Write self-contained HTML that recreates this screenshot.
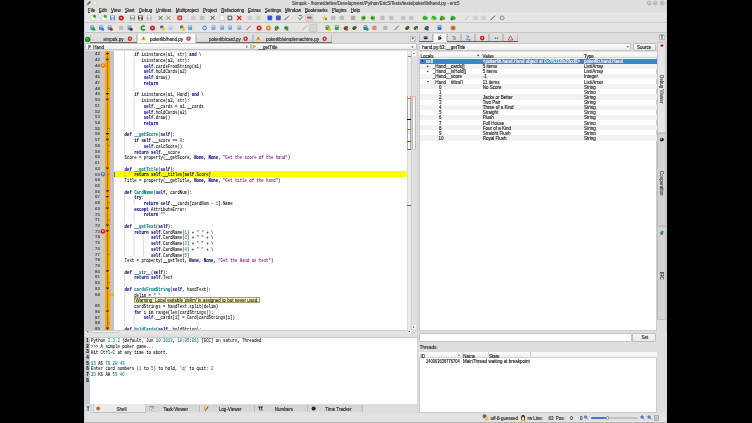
<!DOCTYPE html>
<html><head><meta charset="utf-8"><title>eric5</title><style>
*{margin:0;padding:0;box-sizing:border-box}
html,body{width:752px;height:423px;overflow:hidden;background:#000}
body{position:relative;font-family:"Liberation Sans",sans-serif;font-size:4.5px;color:#1e1e1e}
#root{position:absolute;left:0;top:0;width:752px;height:423px;background:#000;will-change:transform;overflow:hidden}
.a{position:absolute}
.t{position:absolute;white-space:pre;line-height:5px;-webkit-text-stroke:0.12px currentColor}
.m{position:absolute;white-space:pre;font-family:"Liberation Mono",monospace;font-size:4.6px;line-height:5.72px;color:#000;transform:scaleX(0.87);transform-origin:0 0;-webkit-text-stroke:0.05px currentColor}
.k{color:#00007f;font-weight:bold;-webkit-text-stroke:0.1px currentColor}
.f{color:#007f7f;font-weight:bold;-webkit-text-stroke:0.1px currentColor}
.n{color:#007f7f}
.s{color:#7f007f}
</style></head><body><div id="root">
<div class="a" style="left:84.00px;top:0.00px;width:583.00px;height:423.00px;background:#e3e2e1"></div>
<div class="a" style="left:84.00px;top:0.00px;width:1.00px;height:423.00px;background:#b9d3ee"></div>
<div class="a" style="left:666.00px;top:0.00px;width:1.00px;height:423.00px;background:#cfcfcf"></div>
<div class="a" style="left:85.00px;top:0.00px;width:581.00px;height:13.20px;background:#dfdedd"></div>
<div class="t" style="left:292.00px;top:0.60px;color:#3a3a3a;font-size:4.45px">Simpok - /home/detlev/Development/Python/Eric5/Tests/tests/pokerlib/hand.py - eric5</div>
<div class="a" style="left:85.00px;top:13.20px;width:581.00px;height:0.50px;background:#efeeed"></div>
<div class="a" style="left:85.00px;top:13.70px;width:581.00px;height:8.50px;background:#e6e5e4"></div>
<div class="a" style="left:85.00px;top:22.20px;width:581.00px;height:0.80px;background:#cac9c8"></div>
<div class="a" style="left:85.00px;top:23.00px;width:581.00px;height:8.70px;background:#e6e5e4"></div>
<div class="a" style="left:85.00px;top:31.70px;width:581.00px;height:0.90px;background:#c4c3c2"></div>
<div class="t" style="left:88.00px;top:8.20px;color:#1a1a1a">File</div>
<div class="a" style="left:88.00px;top:12.20px;width:2.40px;height:0.50px;background:#444"></div>
<div class="t" style="left:99.00px;top:8.20px;color:#1a1a1a">Edit</div>
<div class="a" style="left:99.00px;top:12.20px;width:2.40px;height:0.50px;background:#444"></div>
<div class="t" style="left:111.00px;top:8.20px;color:#1a1a1a">View</div>
<div class="a" style="left:111.00px;top:12.20px;width:2.40px;height:0.50px;background:#444"></div>
<div class="t" style="left:125.00px;top:8.20px;color:#1a1a1a">Start</div>
<div class="a" style="left:125.00px;top:12.20px;width:2.40px;height:0.50px;background:#444"></div>
<div class="t" style="left:139.00px;top:8.20px;color:#1a1a1a">Debug</div>
<div class="a" style="left:139.00px;top:12.20px;width:2.40px;height:0.50px;background:#444"></div>
<div class="t" style="left:156.00px;top:8.20px;color:#1a1a1a">Unittest</div>
<div class="a" style="left:156.00px;top:12.20px;width:2.40px;height:0.50px;background:#444"></div>
<div class="t" style="left:175.80px;top:8.20px;color:#1a1a1a">Multiproject</div>
<div class="a" style="left:175.80px;top:12.20px;width:2.40px;height:0.50px;background:#444"></div>
<div class="t" style="left:203.00px;top:8.20px;color:#1a1a1a">Project</div>
<div class="a" style="left:203.00px;top:12.20px;width:2.40px;height:0.50px;background:#444"></div>
<div class="t" style="left:221.30px;top:8.20px;color:#1a1a1a">Refactoring</div>
<div class="a" style="left:221.30px;top:12.20px;width:2.40px;height:0.50px;background:#444"></div>
<div class="t" style="left:248.00px;top:8.20px;color:#1a1a1a">Extras</div>
<div class="a" style="left:248.00px;top:12.20px;width:2.40px;height:0.50px;background:#444"></div>
<div class="t" style="left:265.00px;top:8.20px;color:#1a1a1a">Settings</div>
<div class="a" style="left:265.00px;top:12.20px;width:2.40px;height:0.50px;background:#444"></div>
<div class="t" style="left:285.00px;top:8.20px;color:#1a1a1a">Window</div>
<div class="a" style="left:285.00px;top:12.20px;width:2.40px;height:0.50px;background:#444"></div>
<div class="t" style="left:304.90px;top:8.20px;color:#1a1a1a">Bookmarks</div>
<div class="a" style="left:304.90px;top:12.20px;width:2.40px;height:0.50px;background:#444"></div>
<div class="t" style="left:331.80px;top:8.20px;color:#1a1a1a">Plugins</div>
<div class="a" style="left:331.80px;top:12.20px;width:2.40px;height:0.50px;background:#444"></div>
<div class="t" style="left:350.80px;top:8.20px;color:#1a1a1a">Help</div>
<div class="a" style="left:350.80px;top:12.20px;width:2.40px;height:0.50px;background:#444"></div>
<div class="a" style="left:85.00px;top:32.60px;width:332.00px;height:10.60px;background:#dfdedd"></div>
<div class="a" style="left:90.40px;top:34.80px;width:46.80px;height:7.80px;background:linear-gradient(#e4e3e2,#d6d5d4);border-left:0.5px solid #c0bfbe;border-right:0.5px solid #c0bfbe"></div>
<div class="a" style="left:90.40px;top:42.00px;width:46.80px;height:0.80px;background:#707070"></div>
<div class="t" style="left:103.20px;top:36.80px;color:#2a2a2a">simpok.py</div>
<div class="a" style="left:195.60px;top:34.80px;width:57.40px;height:7.80px;background:linear-gradient(#e4e3e2,#d6d5d4);border-left:0.5px solid #c0bfbe;border-right:0.5px solid #c0bfbe"></div>
<div class="a" style="left:195.60px;top:42.00px;width:57.40px;height:0.80px;background:#707070"></div>
<div class="t" style="left:209.00px;top:36.80px;color:#2a2a2a">pokerlib/card.py</div>
<div class="a" style="left:253.00px;top:34.80px;width:78.80px;height:7.80px;background:linear-gradient(#e4e3e2,#d6d5d4);border-left:0.5px solid #c0bfbe;border-right:0.5px solid #c0bfbe"></div>
<div class="a" style="left:253.00px;top:42.00px;width:78.80px;height:0.80px;background:#707070"></div>
<div class="t" style="left:266.00px;top:36.80px;color:#2a2a2a">pokerlib/simplemachine.py</div>
<div class="a" style="left:137.20px;top:33.90px;width:58.40px;height:9.40px;background:#f8f8f8;border-left:0.5px solid #cfcfcf;border-right:0.5px solid #cfcfcf"></div>
<div class="t" style="left:150.00px;top:36.80px;color:#1a1a1a">pokerlib/hand.py</div>
<div class="a" style="left:409.80px;top:35.70px;width:6.20px;height:6.30px;background:#f6f6f6;border:0.5px solid #c8c8c8"></div>
<div class="a" style="left:85.30px;top:43.30px;width:165.40px;height:7.20px;background:linear-gradient(#fdfdfd,#ececec);border:0.5px solid #c4c4c4;border-radius:1px"></div>
<div class="t" style="left:93.20px;top:45.20px;color:#1a1a1a">Hand</div>
<div class="a" style="left:251.20px;top:43.30px;width:165.40px;height:7.20px;background:linear-gradient(#fdfdfd,#ececec);border:0.5px solid #c4c4c4;border-radius:1px"></div>
<div class="t" style="left:258.00px;top:45.20px;color:#1a1a1a">__getTitle</div>
<div class="a" style="left:85.00px;top:51.20px;width:20.00px;height:278.40px;background:#c9c9c9"></div>
<div class="a" style="left:104.60px;top:51.20px;width:0.60px;height:278.40px;background:#b4c6dc"></div>
<div class="a" style="left:105.20px;top:51.20px;width:5.00px;height:278.40px;background:#f8a800"></div>
<div class="a" style="left:110.20px;top:51.20px;width:0.60px;height:278.40px;background:#b4c6dc"></div>
<div class="a" style="left:110.80px;top:51.20px;width:3.20px;height:278.40px;background:linear-gradient(90deg,#c9c9c9,#bcbcbc 75%,#dedede)"></div>
<div class="a" style="left:114.00px;top:51.20px;width:293.00px;height:278.40px;background:#fff"></div>
<div class="a" style="left:407.00px;top:51.20px;width:4.40px;height:278.40px;background:#ebebeb;border-left:0.5px solid #dcdcdc"></div>
<div class="a" style="left:411.40px;top:51.20px;width:5.10px;height:278.40px;background:#e0e0e0;border-left:0.5px solid #d0d0d0"></div>
<div class="a" style="left:411.80px;top:51.40px;width:4.40px;height:5.00px;background:#fbfbfb"></div>
<div class="a" style="left:411.80px;top:96.00px;width:4.40px;height:54.20px;background:#fafafa;border:0.5px solid #bcbcbc;border-radius:1px"></div>
<div class="a" style="left:406.90px;top:96.00px;width:4.50px;height:54.20px;background:#f6f6f6;border-left:0.6px solid #a8a8a8;border-right:0.6px solid #a8a8a8"></div>
<div class="a" style="left:407.60px;top:56.20px;width:3.40px;height:0.90px;background:#8a8a30"></div>
<div class="a" style="left:407.40px;top:97.60px;width:3.60px;height:1.00px;background:#f07020"></div>
<div class="a" style="left:407.40px;top:118.50px;width:3.60px;height:1.00px;background:#111"></div>
<div class="a" style="left:407.40px;top:129.20px;width:3.60px;height:1.00px;background:#e85020"></div>
<div class="a" style="left:407.40px;top:141.10px;width:3.60px;height:1.00px;background:#5a5a18"></div>
<div class="a" style="left:407.40px;top:148.60px;width:3.60px;height:1.00px;background:#6a6a20"></div>
<div class="a" style="left:407.40px;top:204.60px;width:3.60px;height:1.00px;background:#6a6a20"></div>
<div class="a" style="left:412.00px;top:324.60px;width:4.00px;height:4.60px;background:#fafafa"></div>
<div class="a" style="left:416.80px;top:32.60px;width:1.60px;height:391.00px;background:#d6d5d4"></div>
<div class="a" style="left:114.00px;top:171.32px;width:293.00px;height:5.72px;background:#ffff00"></div>
<div class="a" style="left:114.20px;top:171.62px;width:0.70px;height:5.12px;background:#5070b8"></div>
<div class="t" style="left:86px;top:52.40px;width:14px;text-align:right;font-size:4.4px;line-height:4.6px;color:#484848;font-weight:bold;-webkit-text-stroke:0px">42</div>
<div class="m" style="left:114.8px;top:52.30px">        <span class="k">if</span> isinstance(a1, str) <span class="k">and</span> \</div>
<div class="t" style="left:86px;top:58.12px;width:14px;text-align:right;font-size:4.4px;line-height:4.6px;color:#484848;font-weight:bold;-webkit-text-stroke:0px">43</div>
<div class="m" style="left:114.8px;top:58.02px">           isinstance(a2, str):</div>
<div class="t" style="left:86px;top:63.84px;width:14px;text-align:right;font-size:4.4px;line-height:4.6px;color:#484848;font-weight:bold;-webkit-text-stroke:0px">44</div>
<div class="m" style="left:114.8px;top:63.74px">            <span class="k">self</span>.cardsFromString(a1)</div>
<div class="t" style="left:86px;top:69.56px;width:14px;text-align:right;font-size:4.4px;line-height:4.6px;color:#484848;font-weight:bold;-webkit-text-stroke:0px">45</div>
<div class="m" style="left:114.8px;top:69.46px">            <span class="k">self</span>.holdCards(a2)</div>
<div class="t" style="left:86px;top:75.28px;width:14px;text-align:right;font-size:4.4px;line-height:4.6px;color:#484848;font-weight:bold;-webkit-text-stroke:0px">46</div>
<div class="m" style="left:114.8px;top:75.18px">            <span class="k">self</span>.draw()</div>
<div class="t" style="left:86px;top:81.00px;width:14px;text-align:right;font-size:4.4px;line-height:4.6px;color:#484848;font-weight:bold;-webkit-text-stroke:0px">47</div>
<div class="m" style="left:114.8px;top:80.90px">            <span class="k">return</span></div>
<div class="t" style="left:86px;top:86.72px;width:14px;text-align:right;font-size:4.4px;line-height:4.6px;color:#484848;font-weight:bold;-webkit-text-stroke:0px">48</div>
<div class="t" style="left:86px;top:92.44px;width:14px;text-align:right;font-size:4.4px;line-height:4.6px;color:#484848;font-weight:bold;-webkit-text-stroke:0px">49</div>
<div class="m" style="left:114.8px;top:92.34px">        <span class="k">if</span> isinstance(a1, Hand) <span class="k">and</span> \</div>
<div class="t" style="left:86px;top:98.16px;width:14px;text-align:right;font-size:4.4px;line-height:4.6px;color:#484848;font-weight:bold;-webkit-text-stroke:0px">50</div>
<div class="m" style="left:114.8px;top:98.06px">           isinstance(a2, str):</div>
<div class="t" style="left:86px;top:103.88px;width:14px;text-align:right;font-size:4.4px;line-height:4.6px;color:#484848;font-weight:bold;-webkit-text-stroke:0px">51</div>
<div class="m" style="left:114.8px;top:103.78px">            <span class="k">self</span>.__cards = a1.__cards</div>
<div class="t" style="left:86px;top:109.60px;width:14px;text-align:right;font-size:4.4px;line-height:4.6px;color:#484848;font-weight:bold;-webkit-text-stroke:0px">52</div>
<div class="m" style="left:114.8px;top:109.50px">            <span class="k">self</span>.holdCards(a2)</div>
<div class="t" style="left:86px;top:115.32px;width:14px;text-align:right;font-size:4.4px;line-height:4.6px;color:#484848;font-weight:bold;-webkit-text-stroke:0px">53</div>
<div class="m" style="left:114.8px;top:115.22px">            <span class="k">self</span>.draw()</div>
<div class="t" style="left:86px;top:121.04px;width:14px;text-align:right;font-size:4.4px;line-height:4.6px;color:#484848;font-weight:bold;-webkit-text-stroke:0px">54</div>
<div class="m" style="left:114.8px;top:120.94px">            <span class="k">return</span></div>
<div class="t" style="left:86px;top:126.76px;width:14px;text-align:right;font-size:4.4px;line-height:4.6px;color:#484848;font-weight:bold;-webkit-text-stroke:0px">55</div>
<div class="t" style="left:86px;top:132.48px;width:14px;text-align:right;font-size:4.4px;line-height:4.6px;color:#484848;font-weight:bold;-webkit-text-stroke:0px">56</div>
<div class="m" style="left:114.8px;top:132.38px">    <span class="k">def</span> <span class="f">__getScore</span>(<span class="k">self</span>):</div>
<div class="t" style="left:86px;top:138.20px;width:14px;text-align:right;font-size:4.4px;line-height:4.6px;color:#484848;font-weight:bold;-webkit-text-stroke:0px">57</div>
<div class="m" style="left:114.8px;top:138.10px">        <span class="k">if</span> <span class="k">self</span>.__score == <span class="n">0</span>:</div>
<div class="t" style="left:86px;top:143.92px;width:14px;text-align:right;font-size:4.4px;line-height:4.6px;color:#484848;font-weight:bold;-webkit-text-stroke:0px">58</div>
<div class="m" style="left:114.8px;top:143.82px">            <span class="k">self</span>.calcScore()</div>
<div class="t" style="left:86px;top:149.64px;width:14px;text-align:right;font-size:4.4px;line-height:4.6px;color:#484848;font-weight:bold;-webkit-text-stroke:0px">59</div>
<div class="m" style="left:114.8px;top:149.54px">        <span class="k">return</span> <span class="k">self</span>.__score</div>
<div class="t" style="left:86px;top:155.36px;width:14px;text-align:right;font-size:4.4px;line-height:4.6px;color:#484848;font-weight:bold;-webkit-text-stroke:0px">60</div>
<div class="m" style="left:114.8px;top:155.26px">    Score = property(__getScore, <span class="k">None</span>, <span class="k">None</span>, <span class="s">&quot;Get the score of the hand&quot;</span>)</div>
<div class="t" style="left:86px;top:161.08px;width:14px;text-align:right;font-size:4.4px;line-height:4.6px;color:#484848;font-weight:bold;-webkit-text-stroke:0px">61</div>
<div class="t" style="left:86px;top:166.80px;width:14px;text-align:right;font-size:4.4px;line-height:4.6px;color:#484848;font-weight:bold;-webkit-text-stroke:0px">62</div>
<div class="m" style="left:114.8px;top:166.70px">    <span class="k">def</span> <span class="f">__getTitle</span>(<span class="k">self</span>):</div>
<div class="t" style="left:86px;top:172.52px;width:14px;text-align:right;font-size:4.4px;line-height:4.6px;color:#484848;font-weight:bold;-webkit-text-stroke:0px">63</div>
<div class="m" style="left:114.8px;top:172.42px">        <span class="k">return</span> <span class="k">self</span>.__titles[<span class="k">self</span>.Score]</div>
<div class="t" style="left:86px;top:178.24px;width:14px;text-align:right;font-size:4.4px;line-height:4.6px;color:#484848;font-weight:bold;-webkit-text-stroke:0px">64</div>
<div class="m" style="left:114.8px;top:178.14px">    Title = property(__getTitle, <span class="k">None</span>, <span class="k">None</span>, <span class="s">&quot;Get title of the hand&quot;</span>)</div>
<div class="t" style="left:86px;top:183.96px;width:14px;text-align:right;font-size:4.4px;line-height:4.6px;color:#484848;font-weight:bold;-webkit-text-stroke:0px">65</div>
<div class="t" style="left:86px;top:189.68px;width:14px;text-align:right;font-size:4.4px;line-height:4.6px;color:#484848;font-weight:bold;-webkit-text-stroke:0px">66</div>
<div class="m" style="left:114.8px;top:189.58px">    <span class="k">def</span> <span class="f">CardName</span>(<span class="k">self</span>, cardNum):</div>
<div class="t" style="left:86px;top:195.40px;width:14px;text-align:right;font-size:4.4px;line-height:4.6px;color:#484848;font-weight:bold;-webkit-text-stroke:0px">67</div>
<div class="m" style="left:114.8px;top:195.30px">        <span class="k">try</span>:</div>
<div class="t" style="left:86px;top:201.12px;width:14px;text-align:right;font-size:4.4px;line-height:4.6px;color:#484848;font-weight:bold;-webkit-text-stroke:0px">68</div>
<div class="m" style="left:114.8px;top:201.02px">            <span class="k">return</span> <span class="k">self</span>.__cards[cardNum - <span class="n">1</span>].Name</div>
<div class="t" style="left:86px;top:206.84px;width:14px;text-align:right;font-size:4.4px;line-height:4.6px;color:#484848;font-weight:bold;-webkit-text-stroke:0px">69</div>
<div class="m" style="left:114.8px;top:206.74px">        <span class="k">except</span> AttributeError:</div>
<div class="t" style="left:86px;top:212.56px;width:14px;text-align:right;font-size:4.4px;line-height:4.6px;color:#484848;font-weight:bold;-webkit-text-stroke:0px">70</div>
<div class="m" style="left:114.8px;top:212.46px">            <span class="k">return</span> <span class="s">&quot;&quot;</span></div>
<div class="t" style="left:86px;top:218.28px;width:14px;text-align:right;font-size:4.4px;line-height:4.6px;color:#484848;font-weight:bold;-webkit-text-stroke:0px">71</div>
<div class="t" style="left:86px;top:224.00px;width:14px;text-align:right;font-size:4.4px;line-height:4.6px;color:#484848;font-weight:bold;-webkit-text-stroke:0px">72</div>
<div class="m" style="left:114.8px;top:223.90px">    <span class="k">def</span> <span class="f">__getText</span>(<span class="k">self</span>):</div>
<div class="t" style="left:86px;top:229.72px;width:14px;text-align:right;font-size:4.4px;line-height:4.6px;color:#484848;font-weight:bold;-webkit-text-stroke:0px">73</div>
<div class="m" style="left:114.8px;top:229.62px">        <span class="k">return</span> <span class="k">self</span>.CardName(<span class="n">1</span>) + <span class="s">&quot; &quot;</span> + \</div>
<div class="t" style="left:86px;top:235.44px;width:14px;text-align:right;font-size:4.4px;line-height:4.6px;color:#484848;font-weight:bold;-webkit-text-stroke:0px">74</div>
<div class="m" style="left:114.8px;top:235.34px">               <span class="k">self</span>.CardName(<span class="n">2</span>) + <span class="s">&quot; &quot;</span> + \</div>
<div class="t" style="left:86px;top:241.16px;width:14px;text-align:right;font-size:4.4px;line-height:4.6px;color:#484848;font-weight:bold;-webkit-text-stroke:0px">75</div>
<div class="m" style="left:114.8px;top:241.06px">               <span class="k">self</span>.CardName(<span class="n">3</span>) + <span class="s">&quot; &quot;</span> + \</div>
<div class="t" style="left:86px;top:246.88px;width:14px;text-align:right;font-size:4.4px;line-height:4.6px;color:#484848;font-weight:bold;-webkit-text-stroke:0px">76</div>
<div class="m" style="left:114.8px;top:246.78px">               <span class="k">self</span>.CardName(<span class="n">4</span>) + <span class="s">&quot; &quot;</span> + \</div>
<div class="t" style="left:86px;top:252.60px;width:14px;text-align:right;font-size:4.4px;line-height:4.6px;color:#484848;font-weight:bold;-webkit-text-stroke:0px">77</div>
<div class="m" style="left:114.8px;top:252.50px">               <span class="k">self</span>.CardName(<span class="n">5</span>)</div>
<div class="t" style="left:86px;top:258.32px;width:14px;text-align:right;font-size:4.4px;line-height:4.6px;color:#484848;font-weight:bold;-webkit-text-stroke:0px">78</div>
<div class="m" style="left:114.8px;top:258.22px">    Text = property(__getText, <span class="k">None</span>, <span class="k">None</span>, <span class="s">&quot;Get the Hand as text&quot;</span>)</div>
<div class="t" style="left:86px;top:264.04px;width:14px;text-align:right;font-size:4.4px;line-height:4.6px;color:#484848;font-weight:bold;-webkit-text-stroke:0px">79</div>
<div class="t" style="left:86px;top:269.76px;width:14px;text-align:right;font-size:4.4px;line-height:4.6px;color:#484848;font-weight:bold;-webkit-text-stroke:0px">80</div>
<div class="m" style="left:114.8px;top:269.66px">    <span class="k">def</span> <span class="f">__str__</span>(<span class="k">self</span>):</div>
<div class="t" style="left:86px;top:275.48px;width:14px;text-align:right;font-size:4.4px;line-height:4.6px;color:#484848;font-weight:bold;-webkit-text-stroke:0px">81</div>
<div class="m" style="left:114.8px;top:275.38px">        <span class="k">return</span> <span class="k">self</span>.Text</div>
<div class="t" style="left:86px;top:281.20px;width:14px;text-align:right;font-size:4.4px;line-height:4.6px;color:#484848;font-weight:bold;-webkit-text-stroke:0px">82</div>
<div class="t" style="left:86px;top:286.92px;width:14px;text-align:right;font-size:4.4px;line-height:4.6px;color:#484848;font-weight:bold;-webkit-text-stroke:0px">83</div>
<div class="m" style="left:114.8px;top:286.82px">    <span class="k">def</span> <span class="f">cardsFromString</span>(<span class="k">self</span>, handText):</div>
<div class="t" style="left:86px;top:292.64px;width:14px;text-align:right;font-size:4.4px;line-height:4.6px;color:#484848;font-weight:bold;-webkit-text-stroke:0px">84</div>
<div class="m" style="left:114.8px;top:292.54px">        delim = <span class="s">&quot; &quot;</span></div>
<div class="a" style="left:133.70px;top:297.26px;width:126.80px;height:5.60px;background:#fbfbc6;border:0.6px solid #a0a060"></div>
<div class="t" style="left:135.60px;top:297.66px;font-size:4.55px;line-height:5px;color:#2a2a2a">Warning: Local variable &#x27;delim&#x27; is assigned to but never used.</div>
<div class="t" style="left:86px;top:304.08px;width:14px;text-align:right;font-size:4.4px;line-height:4.6px;color:#484848;font-weight:bold;-webkit-text-stroke:0px">85</div>
<div class="m" style="left:114.8px;top:303.98px">        cardStrings = handText.split(delim)</div>
<div class="t" style="left:86px;top:309.80px;width:14px;text-align:right;font-size:4.4px;line-height:4.6px;color:#484848;font-weight:bold;-webkit-text-stroke:0px">86</div>
<div class="m" style="left:114.8px;top:309.70px">        <span class="k">for</span> i <span class="k">in</span> range(len(cardStrings)):</div>
<div class="t" style="left:86px;top:315.52px;width:14px;text-align:right;font-size:4.4px;line-height:4.6px;color:#484848;font-weight:bold;-webkit-text-stroke:0px">87</div>
<div class="m" style="left:114.8px;top:315.42px">            <span class="k">self</span>.__cards[i] = Card(cardStrings[i])</div>
<div class="t" style="left:86px;top:321.24px;width:14px;text-align:right;font-size:4.4px;line-height:4.6px;color:#484848;font-weight:bold;-webkit-text-stroke:0px">88</div>
<div class="t" style="left:86px;top:326.96px;width:14px;text-align:right;font-size:4.4px;line-height:4.6px;color:#484848;font-weight:bold;-webkit-text-stroke:0px">89</div>
<div class="m" style="left:114.8px;top:326.86px">    <span class="k">def</span> <span class="f">holdCards</span>(<span class="k">self</span>, holdString):</div>
<div class="a" style="left:85.00px;top:329.60px;width:332.00px;height:4.40px;background:#e6e6e6;border-top:0.5px solid #cdcdcd"></div>
<div class="a" style="left:90.60px;top:330.10px;width:28.20px;height:3.40px;background:#f8f8f8;border:0.5px solid #c4c4c4;border-radius:1px"></div>
<div class="a" style="left:407.50px;top:329.80px;width:4.00px;height:4.00px;background:#fafafa"></div>
<div class="a" style="left:411.40px;top:329.60px;width:5.10px;height:4.40px;background:#dcdcdc"></div>
<div class="a" style="left:85.00px;top:333.80px;width:332.00px;height:3.00px;background:#e2e1e0"></div>
<div class="a" style="left:85.00px;top:336.60px;width:332.00px;height:67.60px;background:#fff;border-top:0.5px solid #c8c8c8"></div>
<div class="a" style="left:85.00px;top:337.10px;width:4.80px;height:67.10px;background:#cacaca"></div>
<div class="t" style="left:86.2px;top:338.00px;font-size:4.6px;line-height:5px;font-weight:bold;color:#1a1a1a">1</div>
<div class="m" style="left:91.0px;top:338.20px;line-height:5.65px">Python <span class="n">3.3.2</span> (default, Jun <span class="n">10</span> <span class="n">2013</span>, <span class="n">18</span>:<span class="n">05</span>:<span class="n">01</span>) [GCC] on saturn, Threaded</div>
<div class="t" style="left:86.2px;top:343.65px;font-size:4.6px;line-height:5px;font-weight:bold;color:#1a1a1a">2</div>
<div class="m" style="left:91.0px;top:343.85px;line-height:5.65px">&gt;&gt;&gt; A simple poker game...</div>
<div class="t" style="left:86.2px;top:349.30px;font-size:4.6px;line-height:5px;font-weight:bold;color:#1a1a1a">3</div>
<div class="m" style="left:91.0px;top:349.50px;line-height:5.65px">Hit Ctrl-C at any time to abort.</div>
<div class="t" style="left:86.2px;top:354.95px;font-size:4.6px;line-height:5px;font-weight:bold;color:#1a1a1a">4</div>
<div class="t" style="left:86.2px;top:360.60px;font-size:4.6px;line-height:5px;font-weight:bold;color:#1a1a1a">5</div>
<div class="m" style="left:91.0px;top:360.80px;line-height:5.65px"><span class="n">9S</span> AS <span class="n">TS</span> <span class="n">2H</span> <span class="n">4S</span></div>
<div class="t" style="left:86.2px;top:366.25px;font-size:4.6px;line-height:5px;font-weight:bold;color:#1a1a1a">6</div>
<div class="m" style="left:91.0px;top:366.45px;line-height:5.65px">Enter card numbers (<span class="n">1</span> to <span class="n">5</span>) to hold, <span class="s">'q'</span> to quit: <span class="n">2</span></div>
<div class="t" style="left:86.2px;top:371.90px;font-size:4.6px;line-height:5px;font-weight:bold;color:#1a1a1a">7</div>
<div class="m" style="left:91.0px;top:372.10px;line-height:5.65px"><span class="n">2D</span> KS AH <span class="n">5S</span> <span class="n">4C</span></div>
<div class="t" style="left:86.2px;top:377.55px;font-size:4.6px;line-height:5px;font-weight:bold;color:#1a1a1a">8</div>
<div class="a" style="left:85.00px;top:404.20px;width:332.00px;height:8.80px;background:#dfdedd"></div>
<div class="a" style="left:92.60px;top:404.20px;width:53.60px;height:8.60px;background:#ecebea;border-left:0.5px solid #cacaca;border-right:0.5px solid #cacaca;border-bottom:0.6px solid #c0c0c0"></div>
<div class="t" style="left:116.50px;top:407.00px;color:#1e1e1e">Shell</div>
<div class="a" style="left:146.20px;top:404.60px;width:54.30px;height:7.80px;background:linear-gradient(#d4d3d2,#dad9d8);border-right:0.5px solid #bdbcbb"></div>
<div class="t" style="left:163.60px;top:407.00px;color:#1e1e1e">Task-Viewer</div>
<div class="a" style="left:200.50px;top:404.60px;width:54.50px;height:7.80px;background:linear-gradient(#d4d3d2,#dad9d8);border-right:0.5px solid #bdbcbb"></div>
<div class="t" style="left:218.80px;top:407.00px;color:#1e1e1e">Log-Viewer</div>
<div class="a" style="left:255.00px;top:404.60px;width:53.00px;height:7.80px;background:linear-gradient(#d4d3d2,#dad9d8);border-right:0.5px solid #bdbcbb"></div>
<div class="t" style="left:274.80px;top:407.00px;color:#1e1e1e">Numbers</div>
<div class="a" style="left:308.00px;top:404.60px;width:54.60px;height:7.80px;background:linear-gradient(#d4d3d2,#dad9d8);border-right:0.5px solid #bdbcbb"></div>
<div class="t" style="left:325.30px;top:407.00px;color:#1e1e1e">Time Tracker</div>
<div class="a" style="left:85.00px;top:413.00px;width:581.00px;height:9.20px;background:#e3e2e1"></div>
<div class="a" style="left:85.00px;top:422.20px;width:581.00px;height:0.80px;background:#b4b4b4"></div>
<div class="t" style="left:490.60px;top:415.70px;color:#1e1e1e">utf-8-guessed</div>
<div class="t" style="left:527.60px;top:415.70px;color:#1e1e1e">rw</div>
<div class="t" style="left:533.20px;top:415.70px;color:#1e1e1e">Line:</div>
<div class="t" style="left:548.50px;top:415.70px;color:#1e1e1e">63</div>
<div class="t" style="left:555.80px;top:415.70px;color:#1e1e1e">Pos:</div>
<div class="t" style="left:570.20px;top:415.70px;color:#1e1e1e">0</div>
<div class="t" style="left:579.90px;top:415.70px;color:#1e1e1e">0</div>
<div class="a" style="left:591.00px;top:417.30px;width:47.00px;height:1.40px;background:#c4c4c4;border-radius:0.7px"></div>
<div class="a" style="left:591.00px;top:417.10px;width:15.00px;height:1.80px;background:#3a7ad0;border-radius:0.9px"></div>
<div class="a" style="left:605.60px;top:416.10px;width:3.70px;height:3.70px;background:#fdfdfd;border:0.5px solid #9a9a9a;border-radius:1px"></div>
<div class="a" style="left:654.00px;top:414.80px;width:5.20px;height:6.40px;background:#c4c4c4;border:0.5px solid #b0b0b0"></div>
<div class="a" style="left:418.40px;top:32.60px;width:248.00px;height:300.00px;background:#dfdedd"></div>
<div class="a" style="left:418.60px;top:34.20px;width:14.13px;height:7.40px;background:linear-gradient(#e4e3e2,#d6d5d4);border-left:0.5px solid #c0bfbe;border-right:0.5px solid #c0bfbe"></div>
<div class="a" style="left:418.60px;top:41.30px;width:14.13px;height:0.70px;background:#606060"></div>
<div class="a" style="left:432.73px;top:33.60px;width:14.13px;height:8.40px;background:#f8f8f8;border-left:0.5px solid #cfcfcf;border-right:0.5px solid #cfcfcf"></div>
<div class="a" style="left:446.86px;top:34.20px;width:14.13px;height:7.40px;background:linear-gradient(#e4e3e2,#d6d5d4);border-left:0.5px solid #c0bfbe;border-right:0.5px solid #c0bfbe"></div>
<div class="a" style="left:446.86px;top:41.30px;width:14.13px;height:0.70px;background:#606060"></div>
<div class="a" style="left:460.99px;top:34.20px;width:14.13px;height:7.40px;background:linear-gradient(#e4e3e2,#d6d5d4);border-left:0.5px solid #c0bfbe;border-right:0.5px solid #c0bfbe"></div>
<div class="a" style="left:460.99px;top:41.30px;width:14.13px;height:0.70px;background:#606060"></div>
<div class="a" style="left:475.12px;top:34.20px;width:14.13px;height:7.40px;background:linear-gradient(#e4e3e2,#d6d5d4);border-left:0.5px solid #c0bfbe;border-right:0.5px solid #c0bfbe"></div>
<div class="a" style="left:475.12px;top:41.30px;width:14.13px;height:0.70px;background:#606060"></div>
<div class="a" style="left:489.25px;top:34.20px;width:14.13px;height:7.40px;background:linear-gradient(#e4e3e2,#d6d5d4);border-left:0.5px solid #c0bfbe;border-right:0.5px solid #c0bfbe"></div>
<div class="a" style="left:489.25px;top:41.30px;width:14.13px;height:0.70px;background:#606060"></div>
<div class="a" style="left:503.38px;top:34.20px;width:14.13px;height:7.40px;background:linear-gradient(#e4e3e2,#d6d5d4);border-left:0.5px solid #c0bfbe;border-right:0.5px solid #c0bfbe"></div>
<div class="a" style="left:503.38px;top:41.30px;width:14.13px;height:0.70px;background:#606060"></div>
<div class="a" style="left:419.40px;top:43.20px;width:211.80px;height:7.40px;background:linear-gradient(#fdfdfd,#ececec);border:0.5px solid #c4c4c4;border-radius:1px"></div>
<div class="t" style="left:422.20px;top:45.20px;color:#1a1a1a">hand.py:63:__getTitle</div>
<div class="a" style="left:632.50px;top:43.20px;width:23.60px;height:7.40px;background:linear-gradient(#fafafa,#e8e8e8);border:0.5px solid #bdbdbd;border-radius:1px"></div>
<div class="t" style="left:637.00px;top:45.20px;color:#1a1a1a">Source</div>
<div class="a" style="left:419.00px;top:51.60px;width:238.20px;height:279.40px;background:#fff;border:0.5px solid #cacaca"></div>
<div class="a" style="left:419.40px;top:52.00px;width:237.20px;height:6.30px;background:linear-gradient(#fdfdfd,#efefef);border-bottom:0.5px solid #d4d4d4"></div>
<div class="a" style="left:481.20px;top:52.40px;width:0.50px;height:5.60px;background:#ececec"></div>
<div class="a" style="left:582.60px;top:52.40px;width:0.50px;height:5.60px;background:#ececec"></div>
<div class="t" style="left:420.60px;top:53.50px;color:#1a1a1a">Locals</div>
<div class="t" style="left:482.60px;top:53.50px;color:#1a1a1a">Value</div>
<div class="t" style="left:584.00px;top:53.50px;color:#1a1a1a">Type</div>
<div class="a" style="left:419.50px;top:58.60px;width:237.00px;height:5.10px;background:#3784d8"></div>
<div class="t" style="left:426.00px;top:59.00px;color:#fff">self</div>
<div class="t" style="left:482.80px;top:59.00px;color:#fff">&lt;pokerlib.hand.Hand object at 0x7f6318b29cd0&gt;</div>
<div class="t" style="left:584.00px;top:59.00px;color:#fff">pokerlib.hand.Hand</div>
<div class="a" style="left:419.50px;top:63.73px;width:237.00px;height:5.12px;background:#f3f2f1"></div>
<div class="t" style="left:432.70px;top:64.12px;color:#1a1a1a">_Hand__cards[]</div>
<div class="t" style="left:482.80px;top:64.12px;color:#1a1a1a">5 items</div>
<div class="t" style="left:584.00px;top:64.12px;color:#1a1a1a">List/Array</div>
<div class="t" style="left:432.70px;top:69.25px;color:#1a1a1a">_Hand__isHold[]</div>
<div class="t" style="left:482.80px;top:69.25px;color:#1a1a1a">5 items</div>
<div class="t" style="left:584.00px;top:69.25px;color:#1a1a1a">List/Array</div>
<div class="a" style="left:419.50px;top:73.97px;width:237.00px;height:5.12px;background:#f3f2f1"></div>
<div class="t" style="left:432.70px;top:74.38px;color:#1a1a1a">_Hand__score</div>
<div class="t" style="left:482.80px;top:74.38px;color:#1a1a1a">-1</div>
<div class="t" style="left:584.00px;top:74.38px;color:#1a1a1a">Integer</div>
<div class="t" style="left:432.70px;top:79.50px;color:#1a1a1a">_Hand__titles[]</div>
<div class="t" style="left:482.80px;top:79.50px;color:#1a1a1a">11 items</div>
<div class="t" style="left:584.00px;top:79.50px;color:#1a1a1a">List/Array</div>
<div class="a" style="left:419.50px;top:84.22px;width:237.00px;height:5.12px;background:#f3f2f1"></div>
<div class="t" style="left:439.00px;top:84.62px;color:#1a1a1a">0</div>
<div class="t" style="left:482.80px;top:84.62px;color:#1a1a1a">No Score</div>
<div class="t" style="left:584.00px;top:84.62px;color:#1a1a1a">String</div>
<div class="t" style="left:439.00px;top:89.75px;color:#1a1a1a">1</div>
<div class="t" style="left:482.80px;top:89.75px;color:#1a1a1a"></div>
<div class="t" style="left:584.00px;top:89.75px;color:#1a1a1a">String</div>
<div class="a" style="left:419.50px;top:94.47px;width:237.00px;height:5.12px;background:#f3f2f1"></div>
<div class="t" style="left:439.00px;top:94.88px;color:#1a1a1a">2</div>
<div class="t" style="left:482.80px;top:94.88px;color:#1a1a1a">Jacks or Better</div>
<div class="t" style="left:584.00px;top:94.88px;color:#1a1a1a">String</div>
<div class="t" style="left:439.00px;top:100.00px;color:#1a1a1a">3</div>
<div class="t" style="left:482.80px;top:100.00px;color:#1a1a1a">Two Pair</div>
<div class="t" style="left:584.00px;top:100.00px;color:#1a1a1a">String</div>
<div class="a" style="left:419.50px;top:104.72px;width:237.00px;height:5.12px;background:#f3f2f1"></div>
<div class="t" style="left:439.00px;top:105.12px;color:#1a1a1a">4</div>
<div class="t" style="left:482.80px;top:105.12px;color:#1a1a1a">Three of a Kind</div>
<div class="t" style="left:584.00px;top:105.12px;color:#1a1a1a">String</div>
<div class="t" style="left:439.00px;top:110.25px;color:#1a1a1a">5</div>
<div class="t" style="left:482.80px;top:110.25px;color:#1a1a1a">Straight</div>
<div class="t" style="left:584.00px;top:110.25px;color:#1a1a1a">String</div>
<div class="a" style="left:419.50px;top:114.97px;width:237.00px;height:5.12px;background:#f3f2f1"></div>
<div class="t" style="left:439.00px;top:115.38px;color:#1a1a1a">6</div>
<div class="t" style="left:482.80px;top:115.38px;color:#1a1a1a">Flush</div>
<div class="t" style="left:584.00px;top:115.38px;color:#1a1a1a">String</div>
<div class="t" style="left:439.00px;top:120.50px;color:#1a1a1a">7</div>
<div class="t" style="left:482.80px;top:120.50px;color:#1a1a1a">Full House</div>
<div class="t" style="left:584.00px;top:120.50px;color:#1a1a1a">String</div>
<div class="a" style="left:419.50px;top:125.22px;width:237.00px;height:5.12px;background:#f3f2f1"></div>
<div class="t" style="left:439.00px;top:125.62px;color:#1a1a1a">8</div>
<div class="t" style="left:482.80px;top:125.62px;color:#1a1a1a">Four of a Kind</div>
<div class="t" style="left:584.00px;top:125.62px;color:#1a1a1a">String</div>
<div class="t" style="left:439.00px;top:130.75px;color:#1a1a1a">9</div>
<div class="t" style="left:482.80px;top:130.75px;color:#1a1a1a">Straight Flush</div>
<div class="t" style="left:584.00px;top:130.75px;color:#1a1a1a">String</div>
<div class="a" style="left:419.50px;top:135.47px;width:237.00px;height:5.12px;background:#f3f2f1"></div>
<div class="t" style="left:438.40px;top:135.88px;color:#1a1a1a">10</div>
<div class="t" style="left:482.80px;top:135.88px;color:#1a1a1a">Royal Flush</div>
<div class="t" style="left:584.00px;top:135.88px;color:#1a1a1a">String</div>
<div class="a" style="left:418.40px;top:331.00px;width:248.60px;height:82.00px;background:#dfdedd"></div>
<div class="a" style="left:419.40px;top:333.00px;width:212.40px;height:8.60px;background:#fff;border:0.5px solid #c4c4c4;border-radius:1px"></div>
<div class="a" style="left:632.40px;top:333.00px;width:23.80px;height:8.60px;background:linear-gradient(#fafafa,#e8e8e8);border:0.5px solid #bdbdbd;border-radius:1px"></div>
<div class="t" style="left:641.40px;top:335.40px;color:#1a1a1a">Set</div>
<div class="t" style="left:419.80px;top:344.60px;color:#2a2a2a">Threads:</div>
<div class="a" style="left:419.00px;top:351.60px;width:238.20px;height:61.60px;background:#fff;border:0.5px solid #cacaca"></div>
<div class="a" style="left:419.40px;top:352.00px;width:237.20px;height:5.90px;background:linear-gradient(#fdfdfd,#efefef);border-bottom:0.5px solid #d4d4d4"></div>
<div class="a" style="left:462.00px;top:352.30px;width:0.50px;height:5.40px;background:#d4d4d4"></div>
<div class="a" style="left:488.00px;top:352.30px;width:0.50px;height:5.40px;background:#d4d4d4"></div>
<div class="a" style="left:530.20px;top:352.30px;width:0.50px;height:5.40px;background:#d4d4d4"></div>
<div class="t" style="left:420.60px;top:353.50px;color:#1a1a1a">ID</div>
<div class="t" style="left:463.20px;top:353.50px;color:#1a1a1a">Name</div>
<div class="t" style="left:489.00px;top:353.50px;color:#1a1a1a">State</div>
<div class="t" style="left:425.70px;top:358.80px;color:#1a1a1a;transform:scaleX(0.9);transform-origin:0 0">140063636776704</div>
<div class="t" style="left:463.00px;top:358.80px;color:#1a1a1a">MainThread</div>
<div class="t" style="left:488.60px;top:358.80px;color:#1a1a1a">waiting at breakpoint</div>
<div class="a" style="left:657.00px;top:32.60px;width:9.20px;height:288.00px;background:#dcdbda"></div>
<div class="a" style="left:657.30px;top:42.40px;width:8.80px;height:90.40px;background:#e8e7e6;border:0.5px solid #c6c6c6"></div>
<div class="a" style="left:657.30px;top:132.80px;width:8.80px;height:93.60px;background:linear-gradient(90deg,#d2d1d0,#d8d7d6);border:0.5px solid #c0c0c0"></div>
<div class="a" style="left:657.30px;top:226.40px;width:8.80px;height:93.80px;background:linear-gradient(90deg,#d2d1d0,#d8d7d6);border:0.5px solid #c0c0c0"></div>
<div class="a" style="left:657.80px;top:320.20px;width:8.40px;height:12.00px;background:#dfdedd"></div>
<div class="a" style="left:659.20px;top:33.60px;width:5.60px;height:6.40px;background:#eeeeee;border:0.5px solid #bdbdbd"></div>
<div class="t" style="left:658.20px;top:75.00px;writing-mode:vertical-rl;color:#2a2a2a;line-height:7px">Debug Viewer</div>
<div class="t" style="left:658.20px;top:170.60px;writing-mode:vertical-rl;color:#2a2a2a;line-height:7px">Cooperation</div>
<div class="t" style="left:658.20px;top:272.20px;writing-mode:vertical-rl;color:#2a2a2a;line-height:7px">IRC</div>
<svg class="a" style="left:0;top:0" width="752" height="423" viewBox="0 0 752 423"><path d="M86.6,5.2 C87.2,2.6 89,1.4 91,1.3 C90.6,3.4 89,4.8 86.6,5.2 Z" fill="#5a6a1a"/><path d="M86.4,5.4 L88.6,3.2" stroke="#d8b040" stroke-width="0.5"/><circle cx="95" cy="3.2" r="2.1" fill="#f4f4f4" stroke="#b8b8b8" stroke-width="0.5"/><circle cx="649.3" cy="3.2" r="1.9" fill="#e0e0e0" stroke="#8a8a8a" stroke-width="0.5"/><circle cx="655.4" cy="3.2" r="1.9" fill="#e0e0e0" stroke="#8a8a8a" stroke-width="0.5"/><circle cx="662.2" cy="3.2" r="1.9" fill="#e0e0e0" stroke="#8a8a8a" stroke-width="0.5"/><path d="M648.3,3.6 h2" stroke="#555" stroke-width="0.4"/><path d="M654.4,2.4 l1,1.6 l1,-1.6" stroke="#555" stroke-width="0.4" fill="none"/><path d="M661.3,2.4 l1.8,1.8 M663.1,2.4 l-1.8,1.8" stroke="#555" stroke-width="0.4"/><rect x="305.5" y="14.099999999999998" width="7.6" height="7.6" rx="1" fill="#d6d5d4" stroke="#bdbdbd" stroke-width="0.5"/><rect x="309.5" y="24.099999999999998" width="7.6" height="7.6" rx="1" fill="#d6d5d4" stroke="#bdbdbd" stroke-width="0.5"/><path d="M91.1,15.499999999999998 h3.2 l1.2,1.2 v3.8 h-4.4 z" fill="#fafafa" stroke="#b0b0b0" stroke-width="0.4"/><circle cx="94.5" cy="16.299999999999997" r="1.5" fill="#20b020"/><path d="M101.8,15.499999999999998 h3.2 l1.2,1.2 v3.8 h-4.4 z" fill="#fafafa" stroke="#b0b0b0" stroke-width="0.4"/><circle cx="105.2" cy="16.299999999999997" r="1.5" fill="#20b020"/><rect x="110.19999999999999" y="15.499999999999998" width="4.8" height="4.8" fill="#4a88e0" rx="0.5"/><rect x="111.19999999999999" y="15.799999999999999" width="2.8" height="1.8" fill="#f4f4f4"/><rect x="111.6" y="18.5" width="2" height="1.6" fill="#f0f0f0"/><circle cx="121.2" cy="17.9" r="2.5" fill="#c81818"/><circle cx="121.2" cy="17.9" r="0.9" fill="#f8d0d0"/><rect x="130.1" y="15.499999999999998" width="4.8" height="4.8" fill="#8a8a8a" rx="0.5"/><rect x="131.1" y="15.799999999999999" width="2.8" height="1.8" fill="#f4f4f4"/><rect x="131.5" y="18.5" width="2" height="1.6" fill="#f0f0f0"/><rect x="138.1" y="15.499999999999998" width="4.8" height="4.8" fill="#3a3a3a" rx="0.5"/><rect x="139.1" y="15.799999999999999" width="2.8" height="1.8" fill="#f4f4f4"/><rect x="139.5" y="18.5" width="2" height="1.6" fill="#f0f0f0"/><path d="M138.5,19.9 L142.5,15.899999999999999" stroke="#d8a020" stroke-width="1"/><rect x="146.79999999999998" y="15.499999999999998" width="4.8" height="4.8" fill="#b0b0b0" rx="0.5"/><rect x="147.79999999999998" y="15.799999999999999" width="2.8" height="1.8" fill="#f4f4f4"/><rect x="148.2" y="18.5" width="2" height="1.6" fill="#f0f0f0"/><path d="M158.5,15.899999999999999 L162.5,19.9 M162.5,15.899999999999999 L158.5,19.9" stroke="#505050" stroke-width="0.9"/><path d="M166.4,15.899999999999999 L170.4,19.9 M170.4,15.899999999999999 L166.4,19.9" stroke="#808080" stroke-width="0.9"/><rect x="177.29999999999998" y="15.499999999999998" width="4.8" height="4.8" rx="1" fill="#d04040"/><rect x="178.7" y="16.9" width="2" height="2" fill="#f4c0b0"/><rect x="191.10000000000002" y="15.7" width="4.4" height="4.4" rx="0.8" fill="#b0b0b0" opacity="0.55"/><rect x="199.8" y="15.7" width="4.4" height="4.4" rx="0.8" fill="#a0a0a0" opacity="0.55"/><path d="M210.6,15.899999999999999 L214.6,19.9 M214.6,15.899999999999999 L210.6,19.9" stroke="#303030" stroke-width="0.9"/><path d="M219.70000000000002,15.499999999999998 h3.2 l1.2,1.2 v3.8 h-4.4 z" fill="#fafafa" stroke="#b0b0b0" stroke-width="0.4"/><rect x="227.5" y="15.499999999999998" width="4.8" height="4.8" rx="1" fill="#707070"/><rect x="228.9" y="16.9" width="2" height="2" fill="#f4f4f4"/><path d="M237.2,15.899999999999999 L241.2,19.9 M241.2,15.899999999999999 L237.2,19.9" stroke="#e01818" stroke-width="1.3"/><rect x="247.60000000000002" y="15.7" width="4.4" height="4.4" rx="0.8" fill="#b8b8b8" opacity="0.55"/><rect x="256.3" y="15.7" width="4.4" height="4.4" rx="0.8" fill="#b8b8b8" opacity="0.55"/><rect x="267.40000000000003" y="15.499999999999998" width="4.8" height="4.8" rx="1" fill="#2a5ad8"/><rect x="276.0" y="15.499999999999998" width="4.8" height="4.8" rx="1" fill="#2a5ad8"/><rect x="277.4" y="16.9" width="2" height="2" fill="#d83030"/><path d="M284.5,20.099999999999998 L288.9,15.7" stroke="#3050c0" stroke-width="0.9"/><path d="M284.5,20.099999999999998 L285.7,18.9" stroke="#d04040" stroke-width="0.9"/><path d="M298.40000000000003,17.9 l1.6,1.8 l2.8,-3.2" stroke="#20a030" stroke-width="1" fill="none"/><rect x="298.8" y="15.299999999999999" width="3" height="0.8" fill="#555"/><polygon points="324.6,15.299999999999999 325.40000000000003,17.099999999999998 327.20000000000005,17.299999999999997 325.8,18.599999999999998 326.3,20.5 324.6,19.5 322.90000000000003,20.5 323.40000000000003,18.599999999999998 322.0,17.299999999999997 323.8,17.099999999999998" fill="#f2d010"/><circle cx="326.0" cy="19.099999999999998" r="0.9" fill="#2050a0"/><rect x="331.0" y="15.7" width="4.4" height="4.4" rx="0.8" fill="#9a9a9a" opacity="0.55"/><rect x="339.6" y="15.7" width="4.4" height="4.4" rx="0.8" fill="#9a9a9a" opacity="0.55"/><rect x="350.90000000000003" y="15.7" width="4.4" height="4.4" rx="0.8" fill="#7a7a7a" opacity="0.55"/><path d="M361.5,16.5 h2 v-1.2 l2.6,2.6 l-2.6,2.6 v-1.2 h-2 z" fill="#20a020"/><path d="M361.2,20.5 l1.3,-2.2 l1.3,2.2 z" fill="#f0a800"/><path d="M374.7,16.5 h-2 v-1.2 l-2.6,2.6 l2.6,2.6 v-1.2 h2 z" fill="#20a020"/><path d="M372.4,20.5 l1.3,-2.2 l1.3,2.2 z" fill="#f0a800"/><rect x="380.2" y="15.7" width="4.4" height="4.4" rx="0.8" fill="#a0a0a0" opacity="0.55"/><rect x="389.1" y="15.7" width="4.4" height="4.4" rx="0.8" fill="#a0a0a0" opacity="0.55"/><rect x="401.1" y="15.7" width="4.4" height="4.4" rx="0.8" fill="#a8a8a8" opacity="0.55"/><rect x="409.1" y="15.7" width="4.4" height="4.4" rx="0.8" fill="#a8a8a8" opacity="0.55"/><ellipse cx="425.2" cy="18.2" rx="2.6" ry="1.9" fill="#30b830"/><circle cx="424.59999999999997" cy="17.099999999999998" r="1.4" fill="#30b830"/><ellipse cx="433.9" cy="18.2" rx="2.6" ry="1.9" fill="#30b830"/><circle cx="433.29999999999995" cy="17.099999999999998" r="1.4" fill="#30b830"/><circle cx="432.5" cy="19.299999999999997" r="1.1" fill="#f0d000"/><ellipse cx="442.5" cy="18.2" rx="2.6" ry="1.9" fill="#30b830"/><circle cx="441.9" cy="17.099999999999998" r="1.4" fill="#30b830"/><circle cx="441.1" cy="19.299999999999997" r="1.1" fill="#d02020"/><ellipse cx="453.1" cy="18.2" rx="2.6" ry="1.9" fill="#30b830"/><circle cx="452.5" cy="17.099999999999998" r="1.4" fill="#30b830"/><circle cx="451.70000000000005" cy="19.299999999999997" r="1.1" fill="#2050c0"/><path d="M464.90000000000003,20.099999999999998 L469.3,15.7" stroke="#b8b8b8" stroke-width="0.9"/><rect x="473.6" y="15.7" width="4.4" height="4.4" rx="0.8" fill="#c0c0c0" opacity="0.55"/><rect x="481.6" y="15.7" width="4.4" height="4.4" rx="0.8" fill="#c0c0c0" opacity="0.55"/><path d="M490.6,20.099999999999998 L495.0,15.7" stroke="#404040" stroke-width="0.9"/><circle cx="502.2" cy="17.9" r="1.9" fill="none" stroke="#808080" stroke-width="0.9"/><rect x="90.3" y="25.4" width="3.8" height="4.6" fill="#5a90d8" rx="0.4"/><rect x="90.89999999999999" y="26.299999999999997" width="2.4" height="0.8" fill="#dde8f8"/><circle cx="93.89999999999999" cy="29.299999999999997" r="1.5" fill="#20b020"/><rect x="99.0" y="25.4" width="3.8" height="4.6" fill="#5a90d8" rx="0.4"/><rect x="99.6" y="26.299999999999997" width="2.4" height="0.8" fill="#dde8f8"/><circle cx="102.6" cy="29.299999999999997" r="1.5" fill="#3a80e0"/><rect x="107.7" y="25.4" width="3.8" height="4.6" fill="#5a90d8" rx="0.4"/><rect x="108.3" y="26.299999999999997" width="2.4" height="0.8" fill="#dde8f8"/><circle cx="111.3" cy="29.299999999999997" r="1.5" fill="#d02020"/><rect x="119.0" y="25.7" width="4.4" height="4.4" rx="0.8" fill="#a0a0a0" opacity="0.55"/><rect x="127.60000000000001" y="25.4" width="3.8" height="4.6" fill="#5a90d8" rx="0.4"/><rect x="128.20000000000002" y="26.299999999999997" width="2.4" height="0.8" fill="#dde8f8"/><circle cx="131.20000000000002" cy="29.299999999999997" r="1.5" fill="#504010"/><path d="M144.79999999999998,26.599999999999998 A2,2 0 1 0 144.79999999999998,29.2" fill="none" stroke="#10901a" stroke-width="1.5"/><circle cx="152.5" cy="27.9" r="2.5" fill="#c81818"/><circle cx="152.5" cy="27.9" r="0.9" fill="#f8d0d0"/><rect x="160.1" y="25.4" width="3.2" height="3" rx="0.9" fill="#3a70b0"/><rect x="161.7" y="27.4" width="3.2" height="3" rx="0.9" fill="#f0c820"/><rect x="168.79999999999998" y="25.4" width="3.8" height="4.6" fill="#a8c8f0" rx="0.4"/><rect x="169.4" y="26.299999999999997" width="2.4" height="0.8" fill="#dde8f8"/><rect x="180.0" y="25.4" width="3.2" height="3" rx="0.9" fill="#3a70b0"/><rect x="181.6" y="27.4" width="3.2" height="3" rx="0.9" fill="#f0c820"/><rect x="188.29999999999998" y="25.4" width="3.8" height="4.6" fill="#6a9ad8" rx="0.4"/><rect x="188.9" y="26.299999999999997" width="2.4" height="0.8" fill="#dde8f8"/><circle cx="204.6" cy="27.9" r="1.9" fill="none" stroke="#3070d8" stroke-width="0.9"/><rect x="211.6" y="25.4" width="3.8" height="4.6" fill="#78a8e8" rx="0.4"/><rect x="212.20000000000002" y="26.299999999999997" width="2.4" height="0.8" fill="#dde8f8"/><rect x="220.29999999999998" y="25.4" width="3.8" height="4.6" fill="#78a8e8" rx="0.4"/><rect x="220.9" y="26.299999999999997" width="2.4" height="0.8" fill="#dde8f8"/><rect x="228.2" y="25.4" width="3.8" height="4.6" fill="#78a8e8" rx="0.4"/><rect x="228.8" y="26.299999999999997" width="2.4" height="0.8" fill="#dde8f8"/><rect x="237.5" y="25.4" width="3.8" height="4.6" fill="#88b0e8" rx="0.4"/><rect x="238.10000000000002" y="26.299999999999997" width="2.4" height="0.8" fill="#dde8f8"/><path d="M246.3,30.099999999999998 L250.7,25.7" stroke="#c02040" stroke-width="0.9"/><path d="M246.3,30.099999999999998 L247.5,28.9" stroke="#70a0e0" stroke-width="0.9"/><circle cx="259.1" cy="27.9" r="2.5" fill="#d02020"/><circle cx="259.1" cy="27.9" r="0.9" fill="#f0f0f0"/><circle cx="268.4" cy="27.9" r="2.5" fill="#e08a20"/><circle cx="268.4" cy="27.9" r="0.9" fill="#f0f0f0"/><path d="M274.8,26.5 h2 v-1.2 l2.6,2.6 l-2.6,2.6 v-1.2 h-2 z" fill="#20a030"/><path d="M274.5,30.5 l1.3,-2.2 l1.3,2.2 z" fill="#e03030"/><path d="M288.3,26.5 h-2 v-1.2 l-2.6,2.6 l2.6,2.6 v-1.2 h2 z" fill="#20a030"/><path d="M286,30.5 l1.3,-2.2 l1.3,2.2 z" fill="#e03030"/><path d="M302.40000000000003,30.099999999999998 L306.8,25.7" stroke="#c0a050" stroke-width="0.9"/><rect x="325.59999999999997" y="25.4" width="3.8" height="4.6" fill="#30a030" rx="0.4"/><rect x="326.2" y="26.299999999999997" width="2.4" height="0.8" fill="#dde8f8"/><circle cx="329.2" cy="29.299999999999997" r="1.5" fill="#e0c000"/><rect x="334.9" y="25.4" width="3.8" height="4.6" fill="#30a030" rx="0.4"/><rect x="335.5" y="26.299999999999997" width="2.4" height="0.8" fill="#dde8f8"/><ellipse cx="345.8" cy="27.9" rx="2.4" ry="1.6" fill="#3a3a10" transform="rotate(-35 345.8 27.9)"/><path d="M344.0,28.299999999999997 L347.6,26.7" stroke="#50b030" stroke-width="0.7"/><circle cx="346.7" cy="29.5" r="1.2" fill="#d03030"/><ellipse cx="354.5" cy="27.9" rx="2.4" ry="1.6" fill="#3a3a10" transform="rotate(-35 354.5 27.9)"/><path d="M352.7,28.299999999999997 L356.3,26.7" stroke="#50b030" stroke-width="0.7"/><rect x="363.5" y="25.4" width="3.8" height="4.6" fill="#3070c0" rx="0.4"/><rect x="364.1" y="26.299999999999997" width="2.4" height="0.8" fill="#dde8f8"/><circle cx="367.1" cy="29.299999999999997" r="1.5" fill="#30a030"/><rect x="372.2" y="25.7" width="4.4" height="4.4" rx="0.8" fill="#d04040" opacity="0.55"/><rect x="383.1" y="25.7" width="4.4" height="4.4" rx="0.8" fill="#909090" opacity="0.55"/><path d="M394.40000000000003,30.099999999999998 L398.8,25.7" stroke="#505050" stroke-width="0.9"/><ellipse cx="407.3" cy="27.9" rx="2.4" ry="1.6" fill="#3a3a10" transform="rotate(-35 407.3 27.9)"/><path d="M405.5,28.299999999999997 L409.1,26.7" stroke="#50b030" stroke-width="0.7"/><ellipse cx="415.9" cy="27.9" rx="2.4" ry="1.6" fill="#3a3a10" transform="rotate(-35 415.9 27.9)"/><path d="M414.09999999999997,28.299999999999997 L417.7,26.7" stroke="#50b030" stroke-width="0.7"/><circle cx="416.79999999999995" cy="29.5" r="1.2" fill="#c0c0c0"/><ellipse cx="426.6" cy="27.9" rx="2.4" ry="1.6" fill="#3a3a10" transform="rotate(-35 426.6 27.9)"/><path d="M424.8,28.299999999999997 L428.40000000000003,26.7" stroke="#50b030" stroke-width="0.7"/><circle cx="427.5" cy="29.5" r="1.2" fill="#3060c0"/><rect x="437.59999999999997" y="25.4" width="3.8" height="4.6" fill="#3070c0" rx="0.4"/><rect x="438.2" y="26.299999999999997" width="2.4" height="0.8" fill="#dde8f8"/><circle cx="453.1" cy="27.9" r="2.5" fill="#e08020"/><circle cx="453.1" cy="27.9" r="0.9" fill="#3060c0"/><rect x="307" y="16.7" width="4.6" height="1" fill="#555"/><rect x="307" y="18.099999999999998" width="4.6" height="0.6" fill="#e04040"/><circle cx="87.6" cy="39.5" r="2.3" fill="#12a012" stroke="#063806" stroke-width="0.6"/><circle cx="87" cy="38.8" r="0.7" fill="#7fe07f"/><circle cx="129.9" cy="38.8" r="2.2" fill="#cc1a1a"/><circle cx="129.9" cy="38.8" r="1.7" fill="#e03030"/><rect x="129.3" y="37.8" width="1.2" height="1.6" fill="#fff" rx="0.3"/><circle cx="245.6" cy="38.8" r="2.2" fill="#cc1a1a"/><circle cx="245.6" cy="38.8" r="1.7" fill="#e03030"/><rect x="245.0" y="37.8" width="1.2" height="1.6" fill="#fff" rx="0.3"/><circle cx="324.6" cy="38.8" r="2.2" fill="#cc1a1a"/><circle cx="324.6" cy="38.8" r="1.7" fill="#e03030"/><rect x="324.0" y="37.8" width="1.2" height="1.6" fill="#fff" rx="0.3"/><polygon points="258.2,36.099999999999994 260.59999999999997,40.3 255.79999999999998,40.3" fill="#f4b400"/><rect x="257.9" y="37.5" width="0.6" height="1.6" fill="#5a3a00"/><polygon points="143.5,36.099999999999994 145.9,40.3 141.1,40.3" fill="#f4b400"/><rect x="143.2" y="37.5" width="0.6" height="1.6" fill="#5a3a00"/><circle cx="188.5" cy="38.6" r="2.2" fill="#cc1a1a"/><circle cx="188.5" cy="38.6" r="1.7" fill="#e03030"/><rect x="187.9" y="37.6" width="1.2" height="1.6" fill="#fff" rx="0.3"/><polygon points="411.20,37.50 414.60,37.50 412.90,39.70" fill="#10a010"/><polygon points="414.00,40.50 415.20,40.50 414.60,41.30" fill="#333"/><path d="M88.2,45 h1.6 a1.4,1.4 0 0 1 0,2.8 h-0.9 v1.6 h-0.7 z" fill="#4a7ab8"/><rect x="89.9" y="46.6" width="1.2" height="1.4" fill="#f0c020"/><polygon points="245.60,46.30 248.00,46.30 246.80,47.90" fill="#666"/><path d="M253.2,45 v4.2 M253.2,45 l2.6,1.4 l-2.6,1.4" stroke="#b08a10" stroke-width="0.6" fill="#f2d030"/><polygon points="411.20,46.30 413.60,46.30 412.40,47.90" fill="#666"/><polygon points="413.00,54.10 415.00,54.10 414.00,52.70" fill="#444"/><circle cx="413.6" cy="327" r="0.7" fill="#333"/><rect x="107.15" y="51.2" width="0.6" height="278.40000000000003" fill="#8a5800"/><line x1="124.40" y1="51.20" x2="124.40" y2="56.92" stroke="#a4a4a4" stroke-width="0.55" stroke-dasharray="1.2 0.5"/><rect x="105.6" y="52.46" width="4" height="3.4" fill="#f8a800"/><polygon points="105.65,53.01 109.25,53.01 107.45,55.11" fill="#18245e"/><line x1="124.40" y1="56.92" x2="124.40" y2="62.64" stroke="#a4a4a4" stroke-width="0.55" stroke-dasharray="1.2 0.5"/><line x1="134.00" y1="56.92" x2="134.00" y2="62.64" stroke="#a4a4a4" stroke-width="0.55" stroke-dasharray="1.2 0.5"/><rect x="105.6" y="58.18" width="4" height="3.4" fill="#f8a800"/><polygon points="105.65,58.73 109.25,58.73 107.45,60.83" fill="#18245e"/><line x1="124.40" y1="62.64" x2="124.40" y2="68.36" stroke="#a4a4a4" stroke-width="0.55" stroke-dasharray="1.2 0.5"/><line x1="134.00" y1="62.64" x2="134.00" y2="68.36" stroke="#a4a4a4" stroke-width="0.55" stroke-dasharray="1.2 0.5"/><line x1="124.40" y1="68.36" x2="124.40" y2="74.08" stroke="#a4a4a4" stroke-width="0.55" stroke-dasharray="1.2 0.5"/><line x1="134.00" y1="68.36" x2="134.00" y2="74.08" stroke="#a4a4a4" stroke-width="0.55" stroke-dasharray="1.2 0.5"/><line x1="124.40" y1="74.08" x2="124.40" y2="79.80" stroke="#a4a4a4" stroke-width="0.55" stroke-dasharray="1.2 0.5"/><line x1="134.00" y1="74.08" x2="134.00" y2="79.80" stroke="#a4a4a4" stroke-width="0.55" stroke-dasharray="1.2 0.5"/><line x1="124.40" y1="79.80" x2="124.40" y2="85.52" stroke="#a4a4a4" stroke-width="0.55" stroke-dasharray="1.2 0.5"/><line x1="134.00" y1="79.80" x2="134.00" y2="85.52" stroke="#a4a4a4" stroke-width="0.55" stroke-dasharray="1.2 0.5"/><line x1="124.40" y1="85.52" x2="124.40" y2="91.24" stroke="#a4a4a4" stroke-width="0.55" stroke-dasharray="1.2 0.5"/><line x1="134.00" y1="85.52" x2="134.00" y2="91.24" stroke="#a4a4a4" stroke-width="0.55" stroke-dasharray="1.2 0.5"/><rect x="107.2" y="88.08" width="2.6" height="0.6" fill="#8a5800"/><line x1="124.40" y1="91.24" x2="124.40" y2="96.96" stroke="#a4a4a4" stroke-width="0.55" stroke-dasharray="1.2 0.5"/><rect x="105.6" y="92.50" width="4" height="3.4" fill="#f8a800"/><polygon points="105.65,93.05 109.25,93.05 107.45,95.15" fill="#18245e"/><line x1="124.40" y1="96.96" x2="124.40" y2="102.68" stroke="#a4a4a4" stroke-width="0.55" stroke-dasharray="1.2 0.5"/><line x1="134.00" y1="96.96" x2="134.00" y2="102.68" stroke="#a4a4a4" stroke-width="0.55" stroke-dasharray="1.2 0.5"/><rect x="105.6" y="98.22" width="4" height="3.4" fill="#f8a800"/><polygon points="105.65,98.77 109.25,98.77 107.45,100.87" fill="#18245e"/><line x1="124.40" y1="102.68" x2="124.40" y2="108.40" stroke="#a4a4a4" stroke-width="0.55" stroke-dasharray="1.2 0.5"/><line x1="134.00" y1="102.68" x2="134.00" y2="108.40" stroke="#a4a4a4" stroke-width="0.55" stroke-dasharray="1.2 0.5"/><line x1="124.40" y1="108.40" x2="124.40" y2="114.12" stroke="#a4a4a4" stroke-width="0.55" stroke-dasharray="1.2 0.5"/><line x1="134.00" y1="108.40" x2="134.00" y2="114.12" stroke="#a4a4a4" stroke-width="0.55" stroke-dasharray="1.2 0.5"/><line x1="124.40" y1="114.12" x2="124.40" y2="119.84" stroke="#a4a4a4" stroke-width="0.55" stroke-dasharray="1.2 0.5"/><line x1="134.00" y1="114.12" x2="134.00" y2="119.84" stroke="#a4a4a4" stroke-width="0.55" stroke-dasharray="1.2 0.5"/><line x1="124.40" y1="119.84" x2="124.40" y2="125.56" stroke="#a4a4a4" stroke-width="0.55" stroke-dasharray="1.2 0.5"/><line x1="134.00" y1="119.84" x2="134.00" y2="125.56" stroke="#a4a4a4" stroke-width="0.55" stroke-dasharray="1.2 0.5"/><line x1="124.40" y1="125.56" x2="124.40" y2="131.28" stroke="#a4a4a4" stroke-width="0.55" stroke-dasharray="1.2 0.5"/><line x1="134.00" y1="125.56" x2="134.00" y2="131.28" stroke="#a4a4a4" stroke-width="0.55" stroke-dasharray="1.2 0.5"/><rect x="107.2" y="128.12" width="2.6" height="0.6" fill="#8a5800"/><rect x="105.6" y="132.54" width="4" height="3.4" fill="#f8a800"/><polygon points="105.65,133.09 109.25,133.09 107.45,135.19" fill="#18245e"/><line x1="124.40" y1="137.00" x2="124.40" y2="142.72" stroke="#a4a4a4" stroke-width="0.55" stroke-dasharray="1.2 0.5"/><rect x="105.6" y="138.26" width="4" height="3.4" fill="#f8a800"/><polygon points="105.65,138.81 109.25,138.81 107.45,140.91" fill="#18245e"/><line x1="124.40" y1="142.72" x2="124.40" y2="148.44" stroke="#a4a4a4" stroke-width="0.55" stroke-dasharray="1.2 0.5"/><line x1="134.00" y1="142.72" x2="134.00" y2="148.44" stroke="#a4a4a4" stroke-width="0.55" stroke-dasharray="1.2 0.5"/><rect x="107.2" y="145.28" width="2.6" height="0.6" fill="#8a5800"/><line x1="124.40" y1="148.44" x2="124.40" y2="154.16" stroke="#a4a4a4" stroke-width="0.55" stroke-dasharray="1.2 0.5"/><rect x="107.2" y="151.00" width="2.6" height="0.6" fill="#8a5800"/><rect x="105.6" y="166.86" width="4" height="3.4" fill="#f8a800"/><polygon points="105.65,167.41 109.25,167.41 107.45,169.51" fill="#18245e"/><line x1="124.40" y1="171.32" x2="124.40" y2="177.04" stroke="#a4a4a4" stroke-width="0.55" stroke-dasharray="1.2 0.5"/><rect x="107.2" y="173.88" width="2.6" height="0.6" fill="#8a5800"/><rect x="105.6" y="189.74" width="4" height="3.4" fill="#f8a800"/><polygon points="105.65,190.29 109.25,190.29 107.45,192.39" fill="#18245e"/><line x1="124.40" y1="194.20" x2="124.40" y2="199.92" stroke="#a4a4a4" stroke-width="0.55" stroke-dasharray="1.2 0.5"/><rect x="105.6" y="195.46" width="4" height="3.4" fill="#f8a800"/><polygon points="105.65,196.01 109.25,196.01 107.45,198.11" fill="#18245e"/><line x1="124.40" y1="199.92" x2="124.40" y2="205.64" stroke="#a4a4a4" stroke-width="0.55" stroke-dasharray="1.2 0.5"/><line x1="134.00" y1="199.92" x2="134.00" y2="205.64" stroke="#a4a4a4" stroke-width="0.55" stroke-dasharray="1.2 0.5"/><rect x="107.2" y="202.48" width="2.6" height="0.6" fill="#8a5800"/><line x1="124.40" y1="205.64" x2="124.40" y2="211.36" stroke="#a4a4a4" stroke-width="0.55" stroke-dasharray="1.2 0.5"/><rect x="105.6" y="206.90" width="4" height="3.4" fill="#f8a800"/><polygon points="105.65,207.45 109.25,207.45 107.45,209.55" fill="#18245e"/><line x1="124.40" y1="211.36" x2="124.40" y2="217.08" stroke="#a4a4a4" stroke-width="0.55" stroke-dasharray="1.2 0.5"/><line x1="134.00" y1="211.36" x2="134.00" y2="217.08" stroke="#a4a4a4" stroke-width="0.55" stroke-dasharray="1.2 0.5"/><line x1="124.40" y1="217.08" x2="124.40" y2="222.80" stroke="#a4a4a4" stroke-width="0.55" stroke-dasharray="1.2 0.5"/><line x1="134.00" y1="217.08" x2="134.00" y2="222.80" stroke="#a4a4a4" stroke-width="0.55" stroke-dasharray="1.2 0.5"/><rect x="107.2" y="219.64" width="2.6" height="0.6" fill="#8a5800"/><rect x="105.6" y="224.06" width="4" height="3.4" fill="#f8a800"/><polygon points="105.65,224.61 109.25,224.61 107.45,226.71" fill="#18245e"/><line x1="124.40" y1="228.52" x2="124.40" y2="234.24" stroke="#a4a4a4" stroke-width="0.55" stroke-dasharray="1.2 0.5"/><rect x="105.6" y="229.78" width="4" height="3.4" fill="#f8a800"/><polygon points="105.65,230.33 109.25,230.33 107.45,232.43" fill="#18245e"/><line x1="124.40" y1="234.24" x2="124.40" y2="239.96" stroke="#a4a4a4" stroke-width="0.55" stroke-dasharray="1.2 0.5"/><line x1="134.00" y1="234.24" x2="134.00" y2="239.96" stroke="#a4a4a4" stroke-width="0.55" stroke-dasharray="1.2 0.5"/><line x1="143.60" y1="234.24" x2="143.60" y2="239.96" stroke="#a4a4a4" stroke-width="0.55" stroke-dasharray="1.2 0.5"/><line x1="124.40" y1="239.96" x2="124.40" y2="245.68" stroke="#a4a4a4" stroke-width="0.55" stroke-dasharray="1.2 0.5"/><line x1="134.00" y1="239.96" x2="134.00" y2="245.68" stroke="#a4a4a4" stroke-width="0.55" stroke-dasharray="1.2 0.5"/><line x1="143.60" y1="239.96" x2="143.60" y2="245.68" stroke="#a4a4a4" stroke-width="0.55" stroke-dasharray="1.2 0.5"/><line x1="124.40" y1="245.68" x2="124.40" y2="251.40" stroke="#a4a4a4" stroke-width="0.55" stroke-dasharray="1.2 0.5"/><line x1="134.00" y1="245.68" x2="134.00" y2="251.40" stroke="#a4a4a4" stroke-width="0.55" stroke-dasharray="1.2 0.5"/><line x1="143.60" y1="245.68" x2="143.60" y2="251.40" stroke="#a4a4a4" stroke-width="0.55" stroke-dasharray="1.2 0.5"/><line x1="124.40" y1="251.40" x2="124.40" y2="257.12" stroke="#a4a4a4" stroke-width="0.55" stroke-dasharray="1.2 0.5"/><line x1="134.00" y1="251.40" x2="134.00" y2="257.12" stroke="#a4a4a4" stroke-width="0.55" stroke-dasharray="1.2 0.5"/><line x1="143.60" y1="251.40" x2="143.60" y2="257.12" stroke="#a4a4a4" stroke-width="0.55" stroke-dasharray="1.2 0.5"/><rect x="107.2" y="253.96" width="2.6" height="0.6" fill="#8a5800"/><rect x="105.6" y="269.82" width="4" height="3.4" fill="#f8a800"/><polygon points="105.65,270.37 109.25,270.37 107.45,272.47" fill="#18245e"/><line x1="124.40" y1="274.28" x2="124.40" y2="280.00" stroke="#a4a4a4" stroke-width="0.55" stroke-dasharray="1.2 0.5"/><line x1="124.40" y1="280.00" x2="124.40" y2="285.72" stroke="#a4a4a4" stroke-width="0.55" stroke-dasharray="1.2 0.5"/><rect x="107.2" y="282.56" width="2.6" height="0.6" fill="#8a5800"/><rect x="105.6" y="286.98" width="4" height="3.4" fill="#f8a800"/><polygon points="105.65,287.53 109.25,287.53 107.45,289.63" fill="#18245e"/><line x1="124.40" y1="291.44" x2="124.40" y2="297.16" stroke="#a4a4a4" stroke-width="0.55" stroke-dasharray="1.2 0.5"/><line x1="124.40" y1="297.16" x2="124.40" y2="302.88" stroke="#a4a4a4" stroke-width="0.55" stroke-dasharray="1.2 0.5"/><line x1="124.40" y1="302.88" x2="124.40" y2="308.60" stroke="#a4a4a4" stroke-width="0.55" stroke-dasharray="1.2 0.5"/><line x1="124.40" y1="308.60" x2="124.40" y2="314.32" stroke="#a4a4a4" stroke-width="0.55" stroke-dasharray="1.2 0.5"/><rect x="105.6" y="309.86" width="4" height="3.4" fill="#f8a800"/><polygon points="105.65,310.41 109.25,310.41 107.45,312.51" fill="#18245e"/><line x1="124.40" y1="314.32" x2="124.40" y2="320.04" stroke="#a4a4a4" stroke-width="0.55" stroke-dasharray="1.2 0.5"/><line x1="134.00" y1="314.32" x2="134.00" y2="320.04" stroke="#a4a4a4" stroke-width="0.55" stroke-dasharray="1.2 0.5"/><line x1="124.40" y1="320.04" x2="124.40" y2="325.76" stroke="#a4a4a4" stroke-width="0.55" stroke-dasharray="1.2 0.5"/><line x1="134.00" y1="320.04" x2="134.00" y2="325.76" stroke="#a4a4a4" stroke-width="0.55" stroke-dasharray="1.2 0.5"/><rect x="107.2" y="322.60" width="2.6" height="0.6" fill="#8a5800"/><rect x="105.6" y="327.02" width="4" height="3.4" fill="#f8a800"/><polygon points="105.65,327.57 109.25,327.57 107.45,329.67" fill="#18245e"/><circle cx="102.9" cy="65.50" r="2.3" fill="#f07a10"/><rect x="102.30000000000001" y="64.40" width="1.2" height="1.6" fill="#fff" rx="0.3"/><circle cx="102.9" cy="174.18" r="2.3" fill="#3a7ee0"/><rect x="102.30000000000001" y="173.08" width="1.2" height="1.6" fill="#fff" rx="0.3"/><circle cx="102.9" cy="231.38" r="2.3" fill="#e01a2a"/><rect x="102.30000000000001" y="230.28" width="1.2" height="1.6" fill="#fff" rx="0.3"/><polygon points="112,292.34 114.4,296.14 109.6,296.14" fill="#f4b000"/><polygon points="88.30,330.70 88.30,332.90 86.90,331.80" fill="#333"/><circle cx="409.4" cy="331.4" r="0.7" fill="#333"/><path d="M86.3,406.3 h3.6 l-1.2,1.6 v3 h-1.2 v-3 z" fill="#3a70b0"/><circle cx="98.19999999999999" cy="408.6" r="2" fill="#e07020"/><circle cx="97.6" cy="408.0" r="1.1" fill="#40a040"/><rect x="149.79999999999998" y="406.40000000000003" width="4" height="4.4" fill="#fafafa" stroke="#888" stroke-width="0.4"/><path d="M150.39999999999998,408.6 l1,1 l1.8,-2.2" stroke="#20a020" stroke-width="0.7" fill="none"/><rect x="149.79999999999998" y="406.40000000000003" width="4" height="1" fill="#30a030"/><path d="M204.1,406.6 l1.4,4 l2.6,-4.4" stroke="#e0a800" stroke-width="1.1" fill="none"/><path d="M205.7,410.20000000000005 l2.4,-3.6" stroke="#303060" stroke-width="0.6"/><path d="M258.20000000000005,407.0 h4.8 M259.6,407.0 v3.4 M261.6,407.0 v2.8 q0,0.7 0.8,0.6" stroke="#111" stroke-width="0.8" fill="none"/><circle cx="313.6" cy="408.6" r="2" fill="#1a1a1a"/><circle cx="313.1" cy="408.0" r="0.6" fill="#888"/><rect x="482.8" y="414.6" width="3.6" height="3.6" rx="1" fill="#3a6eb0"/><rect x="485" y="416.8" width="3.6" height="3.6" rx="1" fill="#f2c61f"/><ellipse cx="523.1" cy="417.8" rx="2" ry="2.9" fill="#1a1a1a"/><ellipse cx="523.1" cy="418.6" rx="1.2" ry="1.8" fill="#f4f4f4"/><ellipse cx="522" cy="420.6" rx="1.3" ry="0.7" fill="#f0b000"/><ellipse cx="524.2" cy="420.6" rx="1.3" ry="0.7" fill="#f0b000"/><rect x="522.5" y="416" width="1.2" height="0.6" fill="#f0b000"/><circle cx="585.6" cy="417" r="1.3" fill="#6a9ad8" stroke="#1a4aa0" stroke-width="0.5"/><path d="M586.5,417.9 l1.5,1.5" stroke="#555" stroke-width="0.7"/><circle cx="642" cy="417" r="1.3" fill="#6a9ad8" stroke="#1a4aa0" stroke-width="0.5"/><path d="M642.9,417.9 l1.5,1.5" stroke="#555" stroke-width="0.7"/><circle cx="649" cy="417" r="1.3" fill="#6a9ad8" stroke="#1a4aa0" stroke-width="0.5"/><path d="M649.9,417.9 l1.5,1.5" stroke="#555" stroke-width="0.7"/><ellipse cx="425.7" cy="37.2" rx="2.4" ry="1.2" fill="#3a7ad0"/><rect x="424.09999999999997" y="37.8" width="3.2" height="1.4" fill="#222"/><rect x="438.43" y="36.1" width="0.8" height="4" fill="#111"/><path d="M439.43,36.2 l2.4,2 l-2.4,2 z" fill="#111"/><circle cx="440.43" cy="35.6" r="0.6" fill="#e03030"/><path d="M451.96,36.4 h2 v3.6" stroke="#3a8ad8" stroke-width="0.8" fill="none"/><rect x="454.76" y="36.4" width="1.2" height="3.6" fill="#3a8ad8" opacity="0.6"/><path d="M466.09,36 h3 l-2.6,3.8 h3" stroke="#3a8ad8" stroke-width="0.8" fill="none"/><circle cx="469.69" cy="40" r="0.8" fill="#2a6ac0"/><circle cx="482.21999999999997" cy="38.1" r="2.3" fill="#d81818"/><rect x="481.71999999999997" y="37" width="1" height="1.8" fill="#fff"/><circle cx="495.35" cy="38.1" r="0.6" fill="#222"/><circle cx="497.35" cy="38.1" r="0.6" fill="#222"/><polygon points="510.48,35.8 512.78,40 508.18,40" fill="#fde" stroke="#e02020" stroke-width="0.7"/><polygon points="626.60,46.20 629.00,46.20 627.80,47.80" fill="#555"/><polygon points="477.10,54.80 479.30,54.80 478.20,56.40" fill="#222"/><polygon points="421.40,60.35 423.60,60.35 422.50,61.95" fill="#0a1a3a"/><polygon points="427.25,65.18 427.25,67.38 428.75,66.28" fill="#222"/><polygon points="427.25,70.30 427.25,72.50 428.75,71.40" fill="#222"/><polygon points="426.90,80.90 429.10,80.90 428.00,82.40" fill="#222"/><polygon points="458.10,355.65 459.90,355.65 459.00,354.35" fill="#333"/><path d="M660.2,35 h3.6 l-1.2,1.6 v2.6 h-1.2 v-2.6 z" fill="#3a70b0"/><ellipse cx="661.9" cy="45.6" rx="1.6" ry="1.1" fill="#a00c0c"/><circle cx="661.8" cy="139.6" r="1.9" fill="#1a1a1a"/><circle cx="661.2" cy="139" r="0.7" fill="#ddd"/><rect x="660.4" y="231.6" width="2.6" height="3.2" rx="0.6" fill="#3070c0"/><rect x="661.6" y="230.8" width="2" height="2" rx="0.6" fill="#30a030"/></svg>
</div></body></html>
